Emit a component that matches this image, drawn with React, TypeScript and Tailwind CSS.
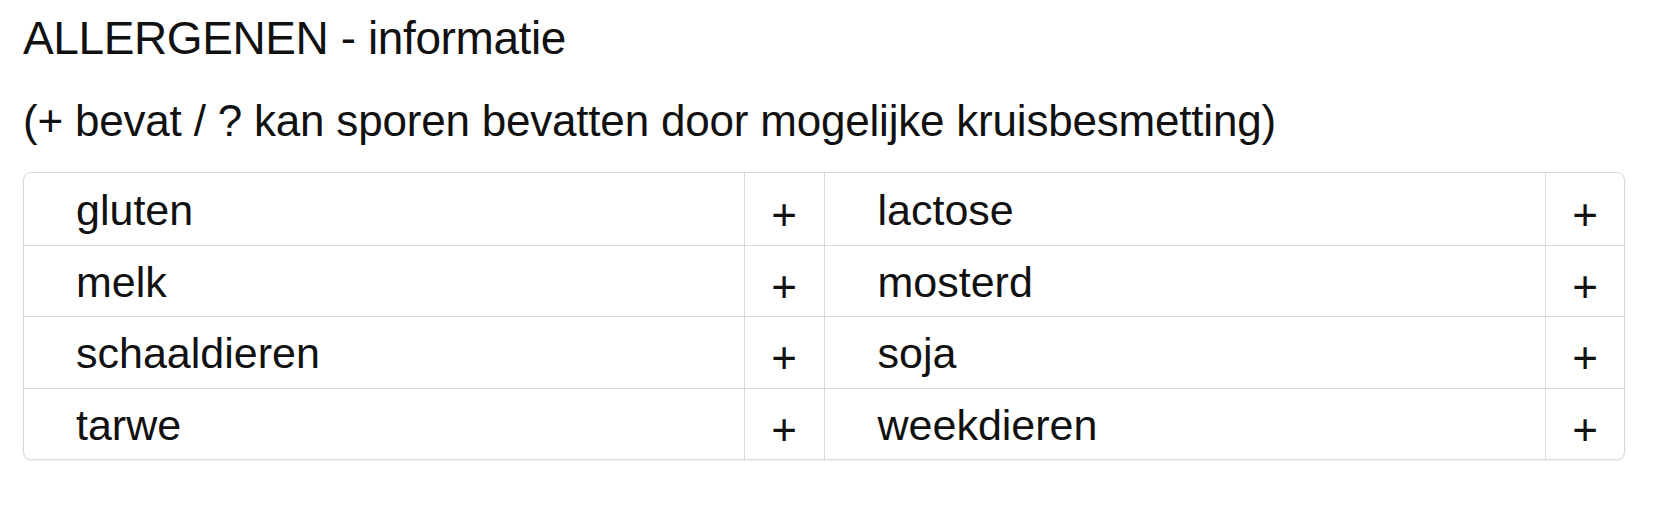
const allergens: [string, string, string, string][] = [
  ["gluten", "+", "lactose", "+"],
  ["melk", "+", "mosterd", "+"],
  ["schaaldieren", "+", "soja", "+"],
  ["tarwe", "+", "weekdieren", "+"],
];

function AllergenRow({ row, first }: { row: [string, string, string, string]; first: boolean }) {
  const [nameA, markA, nameB, markB] = row;
  return (
    <div className={`flex h-[71.5px] ${first ? "" : "border-t border-[#d9d9d9]"}`}>
      <div className="flex flex-1 items-center pl-[52px] pt-[2px]">{nameA}</div>
      <div className="flex w-[80px] items-center justify-center border-l border-[#d9d9d9] pt-[12px] text-[44px]">
        {markA}
      </div>
      <div className="flex flex-1 items-center border-l border-[#d9d9d9] pl-[53px] pt-[2px]">{nameB}</div>
      <div className="flex w-[79px] items-center justify-center border-l border-[#d9d9d9] pt-[12px] text-[44px]">
        {markB}
      </div>
    </div>
  );
}

export default function App() {
  return (
    <div className="h-[510px] w-[1660px] bg-white pl-[23px] pt-[15px] font-['Liberation_Sans',Arial,sans-serif] text-[#111]">
      <h1 className="text-[46px] font-normal leading-none tracking-[-0.4px]">ALLERGENEN - informatie</h1>
      <p className="mt-[38px] text-[44px] leading-none tracking-[-0.2px]">
        (+ bevat / ? kan sporen bevatten door mogelijke kruisbesmetting)
      </p>

      {/* allergen table */}
      <div className="mt-[29px] w-[1602px] overflow-hidden rounded-[8px] border border-[#d9d9d9] text-[43px] shadow-[0_1px_2px_rgba(0,0,0,0.08)]">
        {allergens.map((row, i) => (
          <AllergenRow key={row[0]} row={row} first={i === 0} />
        ))}
      </div>
    </div>
  );
}
